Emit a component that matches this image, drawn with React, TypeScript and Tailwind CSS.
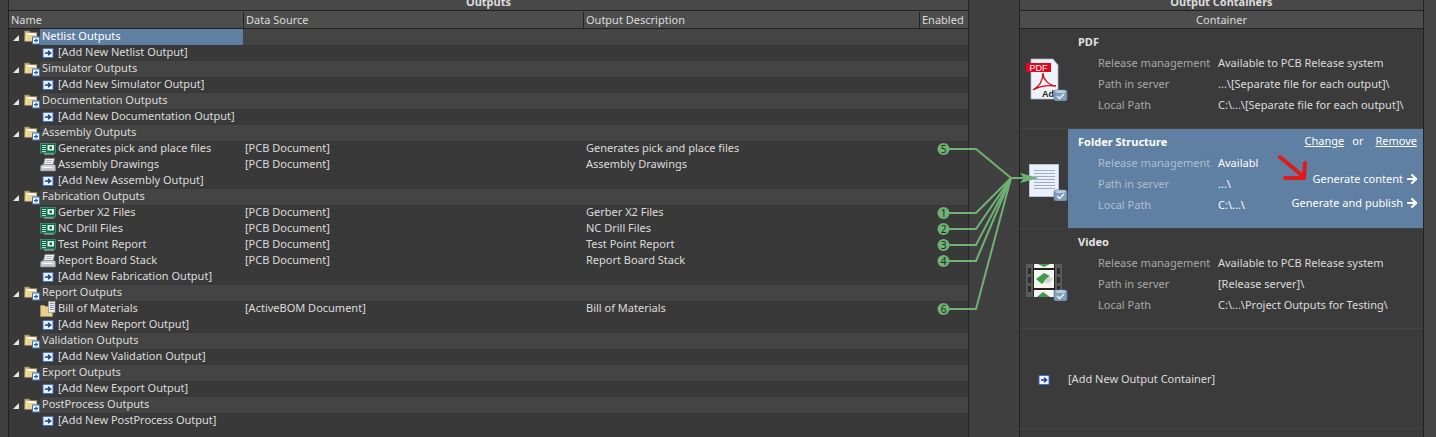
import type { ReactNode } from "react";
import { ArrowRight } from "lucide-react";

type Kind = "add" | "pcb" | "print" | "bom";

type Child = { name: string; kind: Kind; source?: string; desc?: string };
type Group = { name: string; children: Child[]; selected?: boolean };

const add = (name: string): Child => ({ name: `[Add New ${name} Output]`, kind: "add" });

const groups: Group[] = [
  { name: "Netlist Outputs", selected: true, children: [add("Netlist")] },
  { name: "Simulator Outputs", children: [add("Simulator")] },
  { name: "Documentation Outputs", children: [add("Documentation")] },
  {
    name: "Assembly Outputs",
    children: [
      { name: "Generates pick and place files", kind: "pcb", source: "[PCB Document]", desc: "Generates pick and place files" },
      { name: "Assembly Drawings", kind: "print", source: "[PCB Document]", desc: "Assembly Drawings" },
      add("Assembly"),
    ],
  },
  {
    name: "Fabrication Outputs",
    children: [
      { name: "Gerber X2 Files", kind: "pcb", source: "[PCB Document]", desc: "Gerber X2 Files" },
      { name: "NC Drill Files", kind: "pcb", source: "[PCB Document]", desc: "NC Drill Files" },
      { name: "Test Point Report", kind: "pcb", source: "[PCB Document]", desc: "Test Point Report" },
      { name: "Report Board Stack", kind: "print", source: "[PCB Document]", desc: "Report Board Stack" },
      add("Fabrication"),
    ],
  },
  {
    name: "Report Outputs",
    children: [
      { name: "Bill of Materials", kind: "bom", source: "[ActiveBOM Document]", desc: "Bill of Materials" },
      add("Report"),
    ],
  },
  { name: "Validation Outputs", children: [add("Validation")] },
  { name: "Export Outputs", children: [add("Export")] },
  { name: "PostProcess Outputs", children: [add("PostProcess")] },
];

const wires = [
  { n: 5, y: 149 },
  { n: 1, y: 213 },
  { n: 2, y: 229 },
  { n: 3, y: 245 },
  { n: 4, y: 261 },
  { n: 6, y: 309 },
];

function AddIcon() {
  return (
    <svg viewBox="0 0 14 12" className="w-3.5 h-3 shrink-0">
      <rect x="1" y="1.500" width="10" height="9" fill="#eef3fb" stroke="#3f73c8" />
      <path d="M3 6h4.500M6 3.800 8.500 6 6 8.200" fill="none" stroke="#1a3f9c" strokeWidth="1.500" />
    </svg>
  );
}

function PcbIcon() {
  return (
    <svg viewBox="0 0 16 12" className="w-4 h-3 shrink-0 -ml-0.5">
      <rect x="0.500" y="0.500" width="15" height="9.500" fill="#0b6a4b" stroke="#5fa588" strokeWidth="0.600" />
      <path d="M2 2.500h4M2 4.500h4M2 6.500h4M2 8.500h4" stroke="#cfeadb" strokeWidth="0.900" />
      <rect x="7.500" y="2" width="6.500" height="5.500" fill="#dff2e8" />
      <rect x="9.500" y="3.500" width="2.500" height="2.500" fill="#0b6a4b" />
      <path d="M5 10v2M7 10v2M9 10v2M11 10v2M13 10v2" stroke="#a5d6bb" />
    </svg>
  );
}

function PrintIcon() {
  return (
    <svg viewBox="0 0 16 14" className="w-4 h-3.5 shrink-0 -ml-0.5">
      <path d="M5 0.500h9.500L13 7H3.500z" fill="#eef0f3" stroke="#8c929a" strokeWidth="0.700" />
      <path d="M6 2.500h6.500M5.500 4.500h6.500" stroke="#9aa0a8" strokeWidth="0.700" />
      <path d="M2.500 6.500H14l1.500 1v5.500H0.500V8z" fill="#c4c9cf" stroke="#80868e" strokeWidth="0.700" />
      <rect x="2.500" y="8.500" width="10" height="1.500" fill="#f2f3f5" />
    </svg>
  );
}

function BomIcon() {
  return (
    <svg viewBox="0 0 16 16" className="w-4 h-4 shrink-0 -ml-0.5">
      <path d="M0.500 4.500h4l1 1h7v10H0.500z" fill="#e9cf8c" stroke="#b59a5a" strokeWidth="0.600" />
      <rect x="8.500" y="0.500" width="6.500" height="11" fill="#e8ebf0" stroke="#8f96a0" strokeWidth="0.700" />
      <path d="M10 2.500h3.500M10 4.500h3.500M10 6.500h3.500M10 8.500h3.500" stroke="#6d7480" strokeWidth="0.800" />
    </svg>
  );
}

function FolderIcon() {
  return (
    <svg viewBox="0 0 16 16" className="w-4 h-4 shrink-0">
      <path d="M0.500 2h5l1 1.500h6.500V12.500H0.500z" fill="#c9ad74" stroke="#8f7a4e" strokeWidth="0.600" />
      <rect x="2" y="4" width="10" height="2.500" fill="#f6f2e6" />
      <path d="M1 6.500h12V12H1z" fill="#ecd594" />
      <rect x="8.500" y="8" width="7" height="7" fill="#eef3fb" stroke="#3f73c8" />
      <path d="M10 11.500h3M11.700 10l1.600 1.500-1.600 1.500" fill="none" stroke="#1f4fb4" strokeWidth="1.100" />
    </svg>
  );
}

function Badge() {
  return (
    <g>
      <rect x="30" y="33" width="13" height="11" rx="2" fill="#7d9dbb" stroke="#5c7c9a" strokeWidth="0.700" />
      <ellipse cx="36.500" cy="34.500" rx="5.500" ry="1.500" fill="#b7cde0" />
      <path d="M33 39l2.500 2.500L40 37" fill="none" stroke="#f2f6fa" strokeWidth="1.400" />
    </g>
  );
}

function PdfIcon() {
  return (
    <svg viewBox="0 0 44 44" className="w-11 h-11">
      <path d="M7 2h22l5 6v34H7z" fill="#eef3fa" stroke="#a9b5c4" strokeWidth="0.800" />
      <rect x="2" y="6" width="25" height="9" fill="#e3061f" />
      <text x="14.500" y="13.500" textAnchor="middle" fontSize="9" fill="#fff" fontFamily="Liberation Sans, sans-serif">PDF</text>
      <path d="M9 33c7-4 10-11 10-17 0 6 5 12 13 13-8-1-16 0-23 4z" fill="none" stroke="#d0101e" strokeWidth="1.400" />
      <text x="18" y="40" fontSize="9" fontWeight="700" fill="#222" fontFamily="Liberation Sans, sans-serif">Ado</text>
      <Badge />
    </svg>
  );
}

function DocIcon() {
  return (
    <svg viewBox="0 0 44 44" className="w-11 h-11">
      <rect x="5.500" y="7.500" width="29" height="32" fill="#eaf1fa" stroke="#b9c5d6" />
      <path d="M10 13.500h21M10 16.500h21M10 19.500h21M10 22.500h21M10 25.500h21M10 28.500h21M10 31.500h21" stroke="#a3abc8" />
      <Badge />
    </svg>
  );
}

function FilmIcon() {
  return (
    <svg viewBox="0 0 44 44" className="w-11 h-11">
      <rect x="2" y="7" width="36" height="33" fill="#222" />
      <rect x="2" y="7" width="7" height="33" fill="#5a5a5a" />
      <rect x="31" y="7" width="7" height="33" fill="#5a5a5a" />
      <path d="M4 11h3v6H4zM4 20h3v6H4zM4 29h3v6H4zM33 11h3v6h-3zM33 20h3v6h-3zM33 29h3v6h-3z" fill="#2b2b2b" />
      <rect x="10" y="7" width="20" height="4" fill="#f2f5f0" />
      <rect x="10" y="13" width="20" height="18" fill="#f2f5f0" />
      <rect x="10" y="33" width="20" height="7" fill="#f2f5f0" />
      <path d="M12 22l8-6 6 3-8 8z" fill="#3f9a4a" />
      <path d="M20 24l5-5 4 3-5 5z" fill="#cfd8cf" />
      <path d="M14 7h12l-6 3zM13 40l6-5 7 5z" fill="#3f9a4a" />
      <Badge />
    </svg>
  );
}

const childIcons = { add: AddIcon, pcb: PcbIcon, print: PrintIcon, bom: BomIcon };

function TreeGroup({ group }: { group: Group }) {
  return (
    <>
      <div className="flex h-4">
        <div className="w-[31px] shrink-0 flex items-center justify-between pl-1">
          <span className="w-2 h-2 flex items-end">
            <span className="border-b-[6px] border-l-[6px] border-b-neutral-200 border-l-transparent" />
          </span>
          <FolderIcon />
        </div>
        <div className="flex-1 bg-[#444444]">
          <div className={`h-4 leading-3.5 pl-0.5 w-[203px] ${group.selected ? "bg-[#5f80a2] text-white" : ""}`}>
            {group.name}
          </div>
        </div>
      </div>
      {group.children.map((c) => {
        const Icon = childIcons[c.kind];
        return (
          <div key={c.name} className="flex h-4 leading-3.5">
            <div className="w-[31px] shrink-0" />
            <div className="flex-1 grid grid-cols-[203px_341px_335px_1fr]">
              <div className="flex items-center gap-0.5 pl-0.5 whitespace-nowrap">
                <Icon />
                <span className="self-start">{c.name}</span>
              </div>
              <div className="pl-0.5">{c.source}</div>
              <div className="pl-0.5">{c.desc}</div>
              <div />
            </div>
          </div>
        );
      })}
    </>
  );
}

function InfoRow({ label, value, dim }: { label: string; value: string; dim?: boolean }) {
  return (
    <div className="flex h-5 items-center pl-5 whitespace-nowrap">
      <span className={`w-30 ${dim ? "text-[#aebfd0]" : "text-[#a8a8a8]"}`}>{label}</span>
      <span>{value}</span>
    </div>
  );
}

function ContainerRow({ title, icon, rows }: { title: string; icon: ReactNode; rows: [string, string][] }) {
  return (
    <div className="flex h-25 border-b border-[#444444]">
      <div className="w-12 shrink-0 flex items-center pl-1">{icon}</div>
      <div className="flex-1 pl-2.5 pt-0.75 flex flex-col gap-px">
        <div className="h-5 flex items-center font-bold text-[#e4e4e4]">{title}</div>
        {rows.map(([l, v]) => (
          <InfoRow key={l} label={l} value={v} />
        ))}
      </div>
    </div>
  );
}

function Overlay() {
  return (
    <svg viewBox="0 0 1436 437" className="absolute inset-0 w-full h-full pointer-events-none">
      <g fill="none" stroke="#6fb274" strokeWidth="2">
        {wires.map((w) => (
          <path key={w.n} d={`M949 ${w.y}H976L1011 178`} />
        ))}
        <path d="M1011 178H1030" />
      </g>
      <path d="M1020 173L1039 178L1020 183L1024 178z" fill="#6fb274" />
      {wires.map((w) => (
        <g key={w.n}>
          <circle cx="943.500" cy={w.y} r="6" fill="#6fb274" />
          <text x="943.500" y={w.y + 3.500} textAnchor="middle" fontSize="10" fill="#16301a" fontFamily="Noto Sans, sans-serif">
            {w.n}
          </text>
        </g>
      ))}
      <path d="M1280 157L1304 177M1285 178H1304L1305 163" fill="none" stroke="#e01a1a" strokeWidth="4" strokeLinecap="round" strokeLinejoin="round" />
    </svg>
  );
}

export default function App() {
  return (
    <div className="relative flex h-[437px] overflow-hidden bg-[#404040] text-[11px] text-[#dcdcdc] font-['Noto_Sans',sans-serif]">
      <div className="w-2 shrink-0" />

      {/* Outputs */}
      <div className="w-[961px] shrink-0 border-x border-[#222222] bg-[#393939]">
        <div className="h-2.5 bg-[#484848] flex justify-center overflow-hidden">
          <span className="font-bold leading-none -mt-1">Outputs</span>
        </div>
        <div className="h-[19px] border-y border-[#222222] bg-[#4d4d4d] grid grid-cols-[234px_340px_336px_1fr] items-center leading-4">
          <div className="pl-0.5">Name</div>
          <div className="pl-0.5 border-l border-[#222222]">Data Source</div>
          <div className="pl-0.5 border-l border-[#222222]">Output Description</div>
          <div className="pl-0.5 border-l border-[#222222]">Enabled</div>
        </div>
        {groups.map((g) => (
          <TreeGroup key={g.name} group={g} />
        ))}
      </div>

      <div className="flex-1" />

      {/* Output Containers */}
      <div className="w-[405px] shrink-0 border-x border-[#222222] bg-[#3b3b3b]">
        <div className="h-2.5 bg-[#484848] flex justify-center overflow-hidden">
          <span className="font-bold leading-none -mt-1">Output Containers</span>
        </div>
        <div className="h-[19px] border-y border-[#222222] bg-[#4d4d4d] flex items-center justify-center leading-4">Container</div>

        <ContainerRow
          title="PDF"
          icon={<PdfIcon />}
          rows={[
            ["Release management", "Available to PCB Release system"],
            ["Path in server", "...\\[Separate file for each output]\\"],
            ["Local Path", "C:\\...\\[Separate file for each output]\\"],
          ]}
        />

        <div className="flex h-25 border-b border-[#444444]">
          <div className="w-12 shrink-0 flex items-center pl-1">
            <DocIcon />
          </div>
          <div className="flex-1 flex bg-[#5f80a2] text-white">
            <div className="pl-2.5 pt-0.75 flex flex-col gap-px">
              <div className="h-5 flex items-center font-bold">Folder Structure</div>
              <InfoRow dim label="Release management" value="Availabl" />
              <InfoRow dim label="Path in server" value="...\" />
              <InfoRow dim label="Local Path" value="C:\...\" />
            </div>
            <div className="flex-1 flex flex-col items-end pr-1">
              <div className="flex gap-2 pr-0.5 pt-1 h-6">
                <span className="underline">Change</span>
                <span>or</span>
                <span className="underline ml-1">Remove</span>
              </div>
              <div className="flex items-center gap-0.5 h-4 mt-4.5">
                Generate content
                <ArrowRight size={14} strokeWidth={3.5} />
              </div>
              <div className="flex items-center gap-0.5 h-4 mt-2">
                Generate and publish
                <ArrowRight size={14} strokeWidth={3.5} />
              </div>
            </div>
          </div>
        </div>

        <ContainerRow
          title="Video"
          icon={<FilmIcon />}
          rows={[
            ["Release management", "Available to PCB Release system"],
            ["Path in server", "[Release server]\\"],
            ["Local Path", "C:\\...\\Project Outputs for Testing\\"],
          ]}
        />

        <div className="flex h-25 border-b border-[#444444] items-center pl-[18px] pt-0.5 gap-4">
          <AddIcon />
          <span>[Add New Output Container]</span>
        </div>
      </div>

      <div className="w-3 shrink-0 bg-[#454545]" />
      <Overlay />
    </div>
  );
}
